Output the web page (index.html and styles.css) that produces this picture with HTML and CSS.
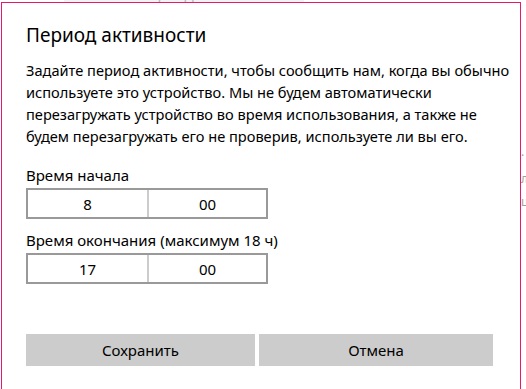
FILE: index.html
```html
<!DOCTYPE html>
<html lang="ru">
<head>
<meta charset="utf-8">
<title>Период активности</title>
<link rel="stylesheet" href="styles.css">
</head>
<body>
<div class="page">
  <div class="page-top"><span class="page-link">Изменить период активности</span></div>
  <div class="page-side">
    <div class="side-line">·</div>
    <div class="side-line">л</div>
    <div class="side-line">ц</div>
  </div>
</div>
<div class="dialog">
  <h1 class="title">Период активности</h1>
  <p class="desc">Задайте период активности, чтобы сообщить нам, когда вы обычно<br>используете это устройство. Мы не будем автоматически<br>перезагружать устройство во время использования, а также не<br>будем перезагружать его не проверив, используете ли вы его.</p>
  <div class="field">
    <div class="label">Время начала</div>
    <div class="time">
      <div class="cell">8</div>
      <div class="cell">00</div>
    </div>
  </div>
  <div class="field">
    <div class="label">Время окончания (максимум 18 ч)</div>
    <div class="time">
      <div class="cell">17</div>
      <div class="cell">00</div>
    </div>
  </div>
  <div class="buttons">
    <div class="btn">Сохранить</div>
    <div class="btn">Отмена</div>
  </div>
</div>
</body>
</html>
```
FILE: styles.css
```css
html, body {
  margin: 0;
  padding: 0;
  background: #ffffff;
  width: 526px;
  height: 389px;
  overflow: hidden;
  font-family: "Noto Sans", "Open Sans", sans-serif;
  color: #000;
}
.page {
  position: relative;
  height: 389px;
}
.page-top {
  height: 2px;
  overflow: hidden;
  display: flex;
  align-items: flex-end;
  padding-left: 64px;
}
.page-link {
  display: block;
  width: 240px;
  overflow: hidden;
  background: #f2f2f2;
  color: #b8b8b8;
  font-size: 15px;
  line-height: 15px;
  white-space: nowrap;
}
.page-side {
  padding-top: 145px;
  padding-left: 521px;
  display: flex;
  flex-direction: column;
  gap: 6px;
  color: #a0a0a0;
  font-size: 12px;
  white-space: nowrap;
}
.side-line {
  width: 5px;
  overflow: hidden;
  line-height: 17px;
}
.dialog {
  position: absolute;
  left: 1px;
  top: 2px;
  width: 520px;
  height: 400px;
  background: #fff;
  border: 1px solid #e8186c;
  padding: 0 20px 0 24px;
  box-sizing: border-box;
}
.title {
  margin: 0;
  padding-top: 18px;
  font-size: 19px;
  font-weight: 400;
  line-height: 28px;
  color: #000;
}
.desc {
  margin: 10px 0 0 0;
  font-size: 14.6px;
  line-height: 22px;
  white-space: nowrap;
}
.field {
  margin-top: 18px;
}
.field + .field {
  margin-top: 11px;
}
.label {
  font-size: 15px;
  line-height: 20px;
  margin-bottom: 3px;
}
.time {
  display: grid;
  grid-template-columns: 1fr 1fr;
  width: 242px;
  height: 31px;
  box-sizing: border-box;
  border: 2px solid #999;
}
.cell {
  display: flex;
  align-items: center;
  justify-content: center;
  font-size: 15px;
}
.cell + .cell {
  border-left: 2px solid #cccccc;
}
.buttons {
  margin-top: 50px;
  display: grid;
  grid-template-columns: 229px 234px;
  gap: 4px;
}
.btn {
  height: 32px;
  background: #cccccc;
  display: flex;
  align-items: center;
  justify-content: center;
  font-size: 15px;
}
```
